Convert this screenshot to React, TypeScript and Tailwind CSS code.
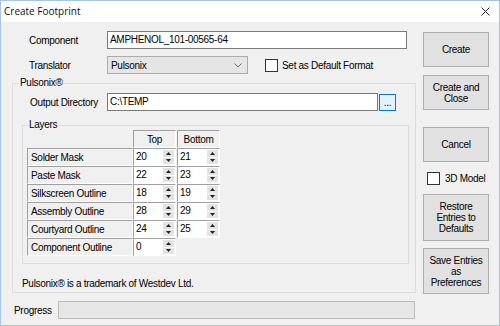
import React from "react";

const font = "font-['Liberation_Sans',Arial,sans-serif]";

function Btn({ children, className }: { children: React.ReactNode; className: string }) {
  return (
    <div
      className={`w-[66px] flex items-center justify-center text-center leading-[11px] bg-[#e1e1e1] border border-[#adadad] ${className}`}
    >
      <span>{children}</span>
    </div>
  );
}

function Check() {
  return <div className="w-[13px] h-[13px] bg-white border border-[#333333] shrink-0" />;
}

function Spin({ value }: { value: string }) {
  return (
    <div className="w-[43px] h-[18px] bg-white border-t border-l border-[#a0a0a0] border-r border-b border-r-white border-b-white flex">
      <div className="flex-1 pl-[2px] leading-[15px]">{value}</div>
      <div className="w-[11px] flex flex-col mr-[1px] mt-[1px] mb-[1px]">
        <div className="flex-1 bg-[#e3e3e3] border-b border-[#f8f8f8] flex items-center justify-center">
          <svg width="5" height="3" viewBox="0 0 5 3">
            <polygon points="0,3 5,3 2.5,0" fill="#222" />
          </svg>
        </div>
        <div className="flex-1 bg-[#e3e3e3] flex items-center justify-center">
          <svg width="5" height="3" viewBox="0 0 5 3">
            <polygon points="0,0 5,0 2.5,3" fill="#222" />
          </svg>
        </div>
      </div>
    </div>
  );
}

const rows: [string, string, string | null][] = [
  ["Solder Mask", "20", "21"],
  ["Paste Mask", "22", "23"],
  ["Silkscreen Outline", "18", "19"],
  ["Assembly Outline", "28", "29"],
  ["Courtyard Outline", "24", "25"],
  ["Component Outline", "0", null],
];

export default function App() {
  return (
    <div
      className={`w-[500px] h-[326px] bg-[#f0f0f0] border border-[#a5c6ea] flex flex-col text-[10px] tracking-[-0.3px] text-black ${font}`}
    >
      {/* Title bar */}
      <div className="h-[21px] bg-white flex items-center justify-between shrink-0">
        <span className="pl-[3px] text-[10px] tracking-normal font-['Open_Sans',sans-serif] text-[#111]">Create Footprint</span>
        <svg width="9" height="9" viewBox="0 0 9 9" className="mr-[9px]">
          <path d="M0.5 0.5 L8.5 8.5 M8.5 0.5 L0.5 8.5" stroke="#222" strokeWidth="1" />
        </svg>
      </div>

      <div className="flex flex-1">
        {/* Left column */}
        <div className="w-[415px] pl-[11px] flex flex-col">
          {/* Component */}
          <div className="mt-[9px] flex items-center h-[18px]">
            <div className="ml-[17px] w-[78px]">Component</div>
            <div className="w-[300px] h-[18px] bg-white border border-[#7a7a7a] pl-[2px] leading-[15px]">
              AMPHENOL_101-00565-64
            </div>
          </div>
          {/* Translator */}
          <div className="mt-[7px] flex items-center h-[18px]">
            <div className="ml-[17px] w-[78px]">Translator</div>
            <div className="w-[141px] h-[18px] bg-[#e5e5e5] border border-[#acacac] pl-[3px] flex items-center justify-between">
              <span>Pulsonix</span>
              <svg width="8" height="5" viewBox="0 0 8 5" className="mr-[5px]">
                <path d="M0.5 0.5 L4 4 L7.5 0.5" stroke="#6a6a6a" fill="none" strokeWidth="1" />
              </svg>
            </div>
            <div className="ml-[17px]">
              <Check />
            </div>
            <span className="ml-[4px]">Set as Default Format</span>
          </div>

          {/* Pulsonix group */}
          <div className="mt-[9px] relative w-[404px] h-[210px] border border-[#dcdcdc] flex flex-col">
            <span className="absolute -top-[7px] left-[6px] px-[1px] bg-[#f0f0f0] leading-[12px]">Pulsonix®</span>
            <div className="mt-[9px] flex items-center h-[18px]">
              <div className="ml-[17px] w-[77px]">Output Directory</div>
              <div className="w-[271px] h-[18px] bg-white border border-[#7a7a7a] pl-[2px] leading-[15px]">
                C:\TEMP
              </div>
              <div className="ml-[1px] w-[17px] h-[17px] bg-[#e5f1fb] border border-[#0078d7] flex items-end justify-center leading-[10px] pb-[2px]">
                ...
              </div>
            </div>

            {/* Layers group */}
            <div className="mt-[14px] ml-[9px] relative w-[387px] h-[139px] border border-[#dcdcdc] flex flex-col">
              <span className="absolute -top-[7px] left-[5px] px-[1px] bg-[#f0f0f0] leading-[12px]">Layers</span>
              <div className="mt-[4px] ml-[4px] flex flex-col">
                <div className="flex h-[18px]">
                  <div className="w-[106px]" />
                  <div className="w-[43px] h-[18px] border-t border-l border-[#a0a0a0] border-r border-b border-r-white border-b-white flex items-center justify-center">
                    Top
                  </div>
                  <div className="ml-[1px] w-[43px] h-[18px] border-t border-l border-[#a0a0a0] border-r border-b border-r-white border-b-white flex items-center justify-center">
                    Bottom
                  </div>
                </div>
                {rows.map(([name, top, bottom]) => (
                  <div key={name} className="flex h-[18px]">
                    <div className="w-[106px] h-[18px] border-t border-l border-[#a0a0a0] border-r border-b border-r-white border-b-white pl-[3px] flex items-center">
                      {name}
                    </div>
                    <Spin value={top} />
                    {bottom !== null && (
                      <div className="ml-[1px]">
                        <Spin value={bottom} />
                      </div>
                    )}
                  </div>
                ))}
              </div>
            </div>

            <div className="mt-[12px] ml-[9px]">Pulsonix® is a trademark of Westdev Ltd.</div>
          </div>

          {/* Progress */}
          <div className="mt-[8px] flex items-center h-[18px]">
            <div className="ml-[2px] w-[44px]">Progress</div>
            <div className="w-[357px] h-[18px] bg-[#e6e6e6] border border-[#bcbcbc]" />
          </div>
        </div>

        {/* Right column */}
        <div className="ml-[7px] flex flex-col">
          <Btn className="mt-[10px] h-[35px]">Create</Btn>
          <Btn className="mt-[8px] h-[35px]">Create and<br />Close</Btn>
          <Btn className="mt-[17px] h-[35px]">Cancel</Btn>
          <div className="mt-[10px] flex items-center h-[13px]">
            <div className="ml-[4px]">
              <Check />
            </div>
            <span className="ml-[5px]">3D Model</span>
          </div>
          <Btn className="mt-[9px] h-[47px]">Restore<br />Entries to<br />Defaults</Btn>
          <Btn className="mt-[7px] h-[46px]">Save Entries<br />as<br />Preferences</Btn>
        </div>
      </div>
    </div>
  );
}
